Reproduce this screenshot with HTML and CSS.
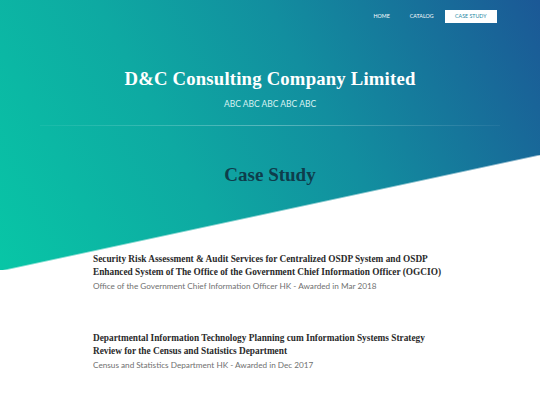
FILE: index.html
```html
<!DOCTYPE html>
<html>
<head>
<meta charset="utf-8">
<link rel="stylesheet" href="styles.css">
</head>
<body>
<div class="page">
  <nav class="nav">
    <a class="nav-link">HOME</a>
    <a class="nav-link">CATALOG</a>
    <a class="nav-link active">CASE STUDY</a>
  </nav>
  <header class="hero">
    <h1 class="brand">D&amp;C Consulting Company Limited</h1>
    <p class="tagline">ABC ABC ABC ABC ABC</p>
    <div class="divider"></div>
    <h2 class="section-title">Case Study</h2>
  </header>
  <main class="cases">
    <article class="case">
      <h3 class="case-title">Security Risk Assessment &amp; Audit Services for Centralized OSDP System and OSDP Enhanced System of The Office of the Government Chief Information Officer (OGCIO)</h3>
      <p class="case-meta">Office of the Government Chief Information Officer HK - Awarded in Mar 2018</p>
    </article>
    <article class="case">
      <h3 class="case-title">Departmental Information Technology Planning cum Information Systems Strategy Review for the Census and Statistics Department</h3>
      <p class="case-meta">Census and Statistics Department HK - Awarded in Dec 2017</p>
    </article>
  </main>
</div>
</body>
</html>
```
FILE: styles.css
```css
html, body {
  margin: 0;
  padding: 0;
  background: #fff;
}
.page {
  width: 540px;
  height: 405px;
  overflow: hidden;
  background:
    linear-gradient(to bottom right, rgba(255,255,255,0) 49.6%, #fff 50.4%) 0 155px / 100% 116px no-repeat,
    linear-gradient(62deg, #08c6a6 0%, #0ea9a2 35%, #128e9f 60%, #1b5896 100%) 0 0 / 100% 270px no-repeat;
  font-family: Lato, "Open Sans", sans-serif;
}
.nav {
  display: flex;
  justify-content: flex-end;
  align-items: center;
  padding: 10px 43px 0 0;
}
.nav-link {
  font-family: Lato, sans-serif;
  font-size: 5.3px;
  color: #fff;
  padding: 3px 10px;
  line-height: 7px;
  white-space: nowrap;
}
.nav-link.active {
  background: #fff;
  color: #1a86a3;
  padding: 3px 10.5px;
  margin-left: 1px;
}
.hero {
  text-align: center;
  color: #fff;
}
.brand {
  font-family: "Liberation Serif", "DejaVu Serif", serif;
  font-weight: bold;
  font-size: 18.7px;
  line-height: 22px;
  margin: 45px 0 0;
  letter-spacing: 0.2px;
}
.tagline {
  font-family: Lato, sans-serif;
  font-size: 8.5px;
  margin: 9px 0 0;
  color: #d8f2f2;
  line-height: 10px;
}
.divider {
  height: 1px;
  margin: 16px 40px 0;
  background: linear-gradient(to right, rgba(255,255,255,0.05), rgba(255,255,255,0.3) 50%, rgba(255,255,255,0.05));
}
.section-title {
  font-family: "Liberation Serif", "DejaVu Serif", serif;
  font-weight: bold;
  font-size: 19px;
  line-height: 22px;
  color: #0e3d4c;
  margin: 38px 0 0;
}
.cases {
  padding: 67px 93px 0;
}
.case {
  margin-bottom: 41px;
}
.case-title {
  font-family: "Liberation Serif", "DejaVu Serif", serif;
  font-weight: bold;
  font-size: 9.3px;
  line-height: 13px;
  color: #2a2a2a;
  margin: 0;
}
.case-meta {
  font-family: Lato, sans-serif;
  font-size: 8.2px;
  line-height: 10px;
  color: #707070;
  margin: 2px 0 0;
}
```
